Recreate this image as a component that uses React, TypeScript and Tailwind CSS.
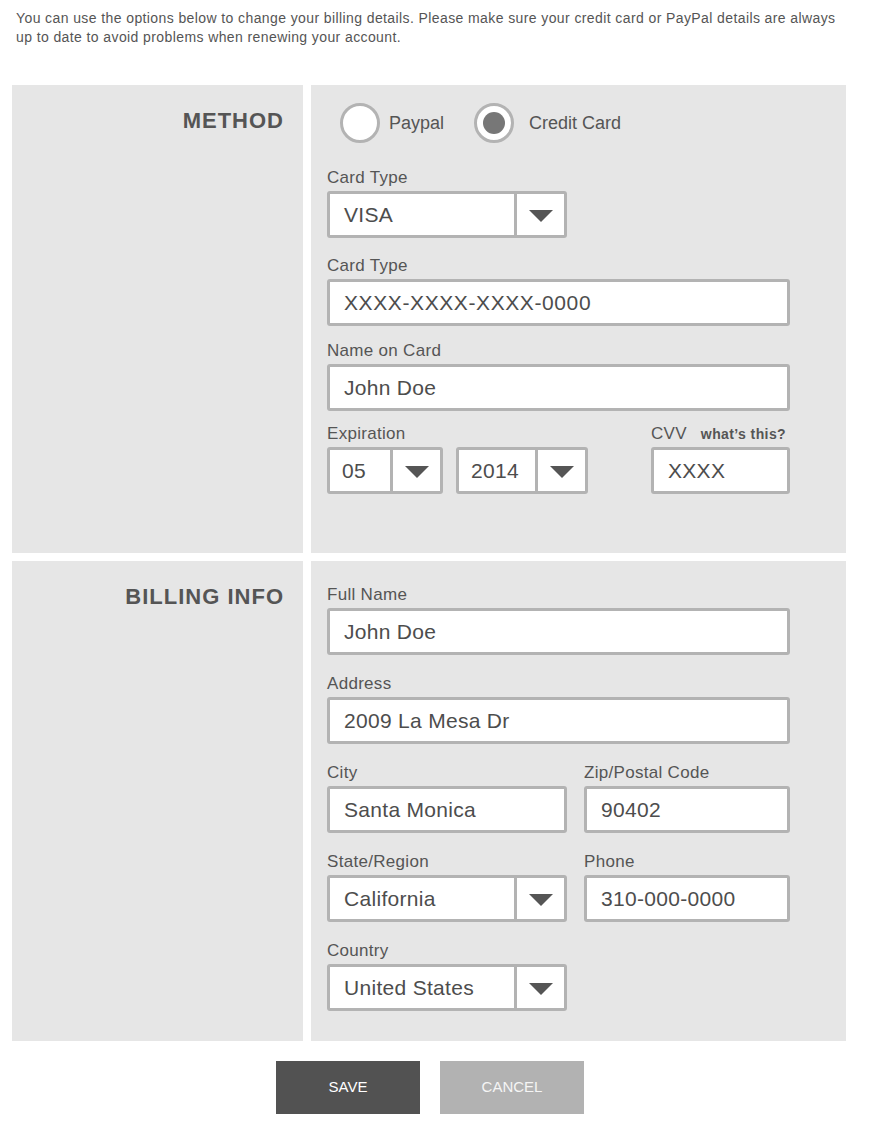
import { ReactNode } from "react";

const labelCls = "text-[17px] leading-[20px] mb-[3px] text-[#555] tracking-[0.3px] whitespace-nowrap";
const boxCls =
  "h-[47px] border-[3px] border-[#b3b3b3] rounded-[3px] bg-white flex items-center text-[21px] text-[#4d4d4d] tracking-[0.3px]";

const Field = ({ label, children, className = "" }: { label: ReactNode; children: ReactNode; className?: string }) => (
  <div className={className}>
    <div className={labelCls}>{label}</div>
    {children}
  </div>
);

const TextBox = ({ value, className = "" }: { value: string; className?: string }) => (
  <div className={`${boxCls} pl-[14px] ${className}`}>{value}</div>
);

const Arrow = () => (
  <svg width="24" height="12" viewBox="0 0 24 12" className="mt-[2px]">
    <polygon points="0,0 24,0 12,12" fill="#555" />
  </svg>
);

const SelectBox = ({ value, className = "", pad = "pl-[14px]" }: { value: string; className?: string; pad?: string }) => (
  <div className={`${boxCls} ${className}`}>
    <div className={`flex-1 ${pad}`}>{value}</div>
    <div className="w-[50px] h-full border-l-[3px] border-[#b3b3b3] flex items-center justify-center">
      <Arrow />
    </div>
  </div>
);

const Radio = ({ checked }: { checked?: boolean }) => (
  <div className="w-10 h-10 rounded-full border-[3px] border-[#b3b3b3] bg-white flex items-center justify-center">
    {checked && <div className="w-[22px] h-[22px] rounded-full bg-[#777]" />}
  </div>
);

const Heading = ({ children }: { children: ReactNode }) => (
  <div className="w-[291px] bg-[#e6e6e6] text-right pr-[19px] pt-[23px] text-[22px] leading-[26px] font-bold tracking-[1px] text-[#555]">
    {children}
  </div>
);

export default function App() {
  return (
    <div className="[font-family:'Liberation_Sans',Arial,sans-serif] bg-white min-h-[1137px]">
      <p className="pl-4 pt-[9px] text-[14px] leading-[19px] text-[#555] tracking-[0.4px]">
        You can use the options below to change your billing details. Please make sure your credit card or PayPal details are always
        <br />
        up to date to avoid problems when renewing your account.
      </p>

      <div className="ml-3 w-[834px] mt-[38px] flex flex-col gap-2">
        {/* method */}
        <div className="flex gap-2">
          <Heading>METHOD</Heading>
          <div className="flex-1 bg-[#e6e6e6] pl-4 pt-[18px] pb-[59px]">
            <div className="w-[463px]">
              <div className="flex items-center text-[18px] text-[#555] ml-[13px]">
                <Radio />
                <span className="ml-[9px]">Paypal</span>
                <div className="ml-[30px]">
                  <Radio checked />
                </div>
                <span className="ml-[15px]">Credit Card</span>
              </div>

              <Field label="Card Type" className="mt-[25px]">
                <SelectBox value="VISA" className="w-[240px]" />
              </Field>
              <Field label="Card Type" className="mt-[18px]">
                <TextBox value="XXXX-XXXX-XXXX-0000" className="tracking-[0.6px]" />
              </Field>
              <Field label="Name on Card" className="mt-[15px]">
                <TextBox value="John Doe" />
              </Field>

              <div className="mt-[13px] flex">
                <Field label="Expiration">
                  <div className="flex gap-[13px]">
                    <SelectBox value="05" className="w-[116px]" pad="pl-[12px]" />
                    <SelectBox value="2014" className="w-[132px]" pad="pl-[12px]" />
                  </div>
                </Field>
                <Field
                  className="ml-auto"
                  label={
                    <span>
                      CVV
                      <span className="ml-[14px] text-[14px] font-bold tracking-[0.4px]">what’s this?</span>
                    </span>
                  }
                >
                  <TextBox value="XXXX" className="w-[139px]" />
                </Field>
              </div>
            </div>
          </div>
        </div>

        {/* billing */}
        <div className="flex gap-2">
          <Heading>BILLING INFO</Heading>
          <div className="flex-1 bg-[#e6e6e6] pl-4 pt-[24px] pb-[30px]">
            <div className="w-[463px] flex flex-col gap-[19px]">
              <Field label="Full Name">
                <TextBox value="John Doe" />
              </Field>
              <Field label="Address">
                <TextBox value="2009 La Mesa Dr" />
              </Field>
              <div className="grid grid-cols-[240px_206px] gap-x-[17px]">
                <Field label="City">
                  <TextBox value="Santa Monica" />
                </Field>
                <Field label="Zip/Postal Code">
                  <TextBox value="90402" />
                </Field>
              </div>
              <div className="grid grid-cols-[240px_206px] gap-x-[17px]">
                <Field label="State/Region">
                  <SelectBox value="California" />
                </Field>
                <Field label="Phone">
                  <TextBox value="310-000-0000" />
                </Field>
              </div>
              <Field label="Country">
                <SelectBox value="United States" className="w-[240px]" />
              </Field>
            </div>
          </div>
        </div>

        <div className="mt-3 flex justify-center gap-5 pl-[2px]">
          <button className="w-[144px] h-[53px] bg-[#525252] text-white text-[15px]">SAVE</button>
          <button className="w-[144px] h-[53px] bg-[#b2b2b2] text-[#f5f5f5] text-[15px]">CANCEL</button>
        </div>
      </div>
    </div>
  );
}
